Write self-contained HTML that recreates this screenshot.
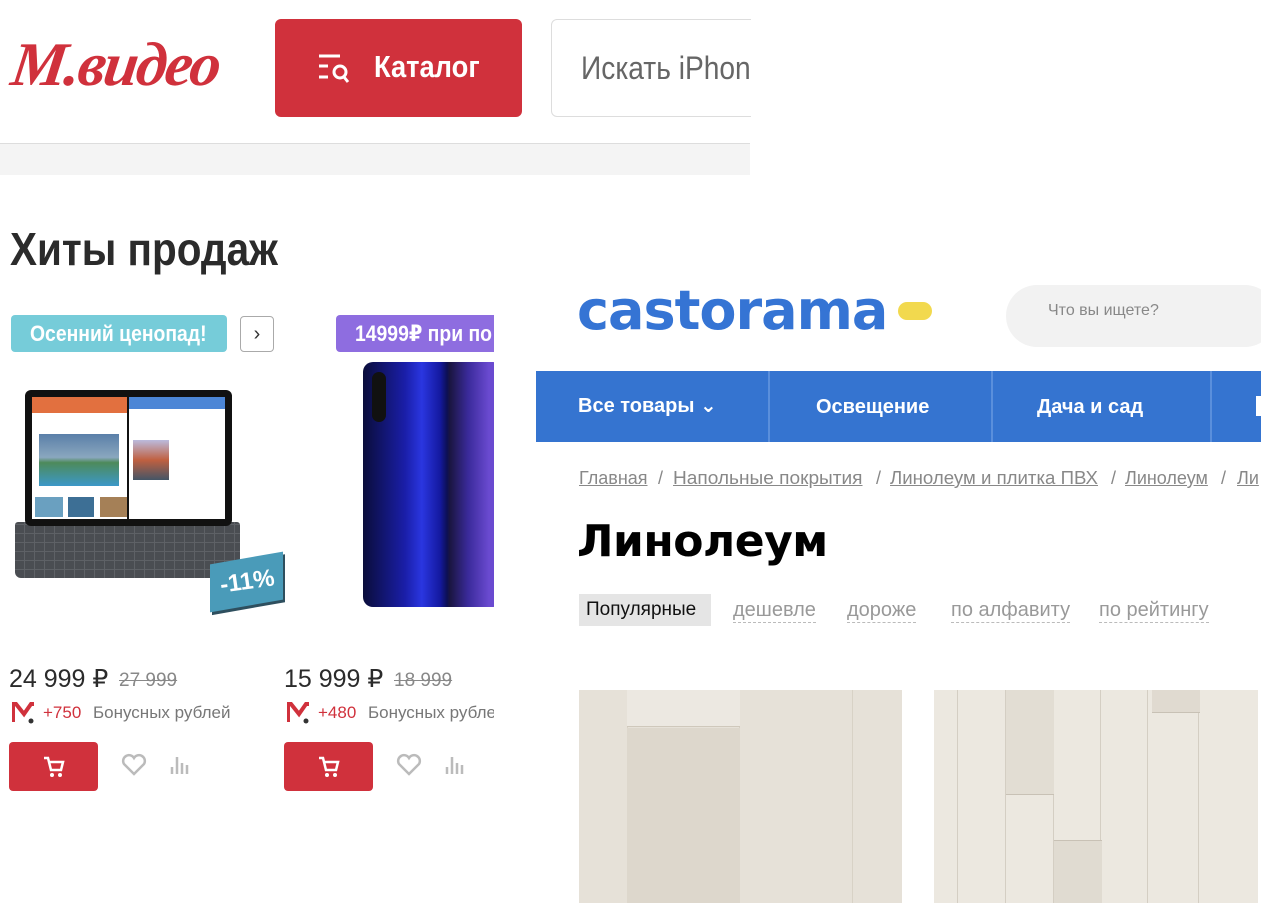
<!DOCTYPE html>
<html><head><meta charset="utf-8"><style>
*{margin:0;padding:0;box-sizing:border-box}
body{width:1261px;height:903px;position:relative;overflow:hidden;background:#fff;font-family:"Liberation Sans","DejaVu Sans",sans-serif}
.a{position:absolute;white-space:nowrap}
.cond{transform-origin:0 0;transform:scaleX(.88)}
.bc{position:absolute;top:468px;font-size:18px;color:#888;white-space:nowrap;transform-origin:0 0}
.bc u{text-decoration:underline}
</style></head><body>
<!-- M.video header -->
<div class="a" style="left:12px;top:30px;font-family:'Liberation Serif',serif;font-style:italic;font-weight:bold;font-size:62px;color:#d0313c;letter-spacing:-2px;line-height:70px;transform:skewX(-8deg)">М.видео</div>
<div class="a" style="left:275px;top:19px;width:247px;height:98px;background:#d0313c;border-radius:6px"></div>
<svg class="a" style="left:318px;top:52px" width="40" height="36" viewBox="0 0 40 36"><g stroke="#fff" stroke-width="3" fill="none"><line x1="1" y1="4" x2="22" y2="4"/><line x1="1" y1="14" x2="10" y2="14"/><line x1="1" y1="25" x2="10" y2="25"/><circle cx="22" cy="20" r="6"/><line x1="26" y1="25" x2="30" y2="30"/></g></svg>
<div class="a cond" style="left:374px;top:49px;font-size:31px;font-weight:bold;color:#fff">Каталог</div>
<div class="a" style="left:551px;top:19px;width:240px;height:98px;border:1.5px solid #ddd;border-radius:6px"></div>
<div class="a cond" style="left:581px;top:50px;font-size:32px;color:#666">Искать iPhon</div>
<div class="a" style="left:0;top:143px;width:750px;height:1px;background:#ddd"></div>
<div class="a" style="left:0;top:144px;width:750px;height:31px;background:#f4f4f4"></div>
<div class="a" style="left:751px;top:0;width:510px;height:176px;background:#fff"></div>
<div class="a cond" style="left:10px;top:222px;font-size:46px;font-weight:bold;color:#2b2b2b">Хиты продаж</div>
<div class="a" style="left:11px;top:315px;width:216px;height:37px;background:#76ccd9;border-radius:4px"></div>
<div class="a cond" style="left:30px;top:321px;font-size:22px;font-weight:bold;color:#fff">Осенний ценопад!</div>
<div class="a" style="left:240px;top:316px;width:34px;height:36px;border:1px solid #aaa;border-radius:4px;font-size:20px;text-align:center;line-height:34px;color:#333">›</div>
<div class="a" style="left:336px;top:315px;width:170px;height:37px;background:#8e6de0;border-radius:4px"></div>
<div class="a cond" style="left:355px;top:321px;font-size:22px;font-weight:bold;color:#fff">14999₽ при по</div>
<!-- tablet -->
<div class="a" style="left:15px;top:522px;width:225px;height:56px;background:#4a4d52;border-radius:3px 3px 6px 6px;background-image:repeating-linear-gradient(90deg,transparent 0 9px,#5e6166 9px 10px),repeating-linear-gradient(0deg,transparent 0 8px,#5e6166 8px 9px)"></div>
<div class="a" style="left:25px;top:390px;width:207px;height:136px;background:#111;border-radius:6px"></div>
<div class="a" style="left:32px;top:397px;width:95px;height:122px;background:#fff"></div>
<div class="a" style="left:32px;top:397px;width:95px;height:16px;background:#e2703f"></div>
<div class="a" style="left:39px;top:434px;width:80px;height:52px;background:linear-gradient(#5a7fa8,#8aa7bf 45%,#4d8a5a 55%,#3c98c8)"></div>
<div class="a" style="left:35px;top:497px;width:28px;height:20px;background:#6aa0c0"></div>
<div class="a" style="left:68px;top:497px;width:26px;height:20px;background:#3d6f95"></div>
<div class="a" style="left:100px;top:497px;width:27px;height:20px;background:#a58057"></div>
<div class="a" style="left:129px;top:397px;width:96px;height:122px;background:#fff"></div>
<div class="a" style="left:129px;top:397px;width:96px;height:12px;background:#4c86d6"></div>
<div class="a" style="left:133px;top:440px;width:36px;height:40px;background:linear-gradient(#bbd,#c06040 50%,#456)"></div>
<div class="a" style="left:210px;top:558px;width:73px;height:48px;background:#4a9bb9;transform:skewY(-10deg);box-shadow:2px 3px 0 #2e4f5e"></div>
<div class="a" style="left:220px;top:568px;font-size:24px;font-weight:bold;color:#fff;transform:rotate(-8deg)">-11%</div>
<!-- phone -->
<div class="a" style="left:363px;top:362px;width:140px;height:245px;border-radius:10px;background:linear-gradient(90deg,#0a0d3a,#1a1ea8 30%,#2a36e0 42%,#1419a0 55%,#0c0f55 60%,#1a1540 62%,#3a2a9a 75%,#6a4ad0 90%)"></div>
<div class="a" style="left:372px;top:372px;width:14px;height:50px;background:#111;border-radius:7px"></div>
<!-- prices -->
<div class="a" style="left:9px;top:664px;font-size:25px;color:#2b2b2b">24 999 ₽</div>
<div class="a" style="left:119px;top:670px;font-size:19px;color:#888;text-decoration:line-through">27 999</div>
<div class="a" style="left:284px;top:664px;font-size:25px;color:#2b2b2b">15 999 ₽</div>
<div class="a" style="left:394px;top:670px;font-size:19px;color:#888;text-decoration:line-through">18 999</div>
<svg class="a" style="left:12px;top:702px" width="24" height="22"><path d="M1 20V2h3l8 10 7-10h3" stroke="#d0313c" stroke-width="4" fill="none"/><circle cx="19" cy="19" r="2.5" fill="#333"/></svg>
<div class="a" style="left:43px;top:703px;font-size:17px;color:#d0313c">+750</div>
<div class="a" style="left:93px;top:703px;font-size:17px;color:#777">Бонусных рублей</div>
<svg class="a" style="left:287px;top:702px" width="24" height="22"><path d="M1 20V2h3l8 10 7-10h3" stroke="#d0313c" stroke-width="4" fill="none"/><circle cx="19" cy="19" r="2.5" fill="#333"/></svg>
<div class="a" style="left:318px;top:703px;font-size:17px;color:#d0313c">+480</div>
<div class="a" style="left:368px;top:703px;font-size:17px;color:#777">Бонусных рубле</div>
<div class="a" style="left:9px;top:742px;width:89px;height:49px;background:#d0313c;border-radius:4px"></div>
<div class="a" style="left:284px;top:742px;width:89px;height:49px;background:#d0313c;border-radius:4px"></div>
<svg class="a" style="left:42px;top:755px" width="24" height="24"><path d="M2 3h4l3 12h10l2-8H8" stroke="#fff" stroke-width="2.5" fill="none"/><circle cx="10" cy="20" r="2" fill="#fff"/><circle cx="18" cy="20" r="2" fill="#fff"/></svg>
<svg class="a" style="left:317px;top:755px" width="24" height="24"><path d="M2 3h4l3 12h10l2-8H8" stroke="#fff" stroke-width="2.5" fill="none"/><circle cx="10" cy="20" r="2" fill="#fff"/><circle cx="18" cy="20" r="2" fill="#fff"/></svg>
<svg class="a" style="left:121px;top:753px" width="26" height="24"><path d="M13 21L3 11a5.5 5.5 0 0 1 10-6 5.5 5.5 0 0 1 10 6z" stroke="#bbb" stroke-width="2.5" fill="none"/></svg>
<svg class="a" style="left:396px;top:753px" width="26" height="24"><path d="M13 21L3 11a5.5 5.5 0 0 1 10-6 5.5 5.5 0 0 1 10 6z" stroke="#bbb" stroke-width="2.5" fill="none"/></svg>
<svg class="a" style="left:169px;top:753px" width="20" height="22"><g stroke="#bbb" stroke-width="2.5"><line x1="3" y1="21" x2="3" y2="14"/><line x1="8" y1="21" x2="8" y2="4"/><line x1="13" y1="21" x2="13" y2="10"/><line x1="18" y1="21" x2="18" y2="12"/></g></svg>
<svg class="a" style="left:444px;top:753px" width="20" height="22"><g stroke="#bbb" stroke-width="2.5"><line x1="3" y1="21" x2="3" y2="14"/><line x1="8" y1="21" x2="8" y2="4"/><line x1="13" y1="21" x2="13" y2="10"/><line x1="18" y1="21" x2="18" y2="12"/></g></svg>
<!-- castorama panel -->
<div class="a" style="left:494px;top:270px;width:767px;height:633px;background:#fff"></div>
<div class="a" style="left:577px;top:276px;font-family:'DejaVu Sans',sans-serif;font-weight:bold;font-size:54px;color:#3574d4;letter-spacing:-1px;line-height:70px">castorama</div>
<div class="a" style="left:898px;top:302px;width:34px;height:18px;border-radius:9px;background:#f2d94e"></div>
<div class="a" style="left:1006px;top:285px;width:270px;height:62px;border-radius:31px;background:#f2f2f2"></div>
<div class="a" style="left:1048px;top:302px;font-size:16px;color:#888">Что вы ищете?</div>
<div class="a" style="left:536px;top:371px;width:725px;height:71px;background:#3574d0"></div>
<div class="a" style="left:768px;top:371px;width:2px;height:71px;background:#5a8fdc"></div>
<div class="a" style="left:991px;top:371px;width:2px;height:71px;background:#5a8fdc"></div>
<div class="a" style="left:1210px;top:371px;width:2px;height:71px;background:#5a8fdc"></div>
<div class="a" style="left:578px;top:393px;font-size:20px;font-weight:bold;color:#fff">Все товары ⌄</div>
<div class="a" style="left:816px;top:396px;font-size:20px;font-weight:bold;color:#fff">Освещение</div>
<div class="a" style="left:1037px;top:396px;font-size:20px;font-weight:bold;color:#fff">Дача и сад</div>
<div class="a" style="left:1256px;top:396px;width:5px;height:20px;background:#fff"></div>
<div class="bc" style="left:579px"><u>Главная</u></div><div class="bc" style="left:658px">/</div>
<div class="bc" style="left:673px;transform:scaleX(1.06)"><u>Напольные покрытия</u></div><div class="bc" style="left:876px">/</div>
<div class="bc" style="left:890px;transform:scaleX(1.035)"><u>Линолеум и плитка ПВХ</u></div><div class="bc" style="left:1111px">/</div>
<div class="bc" style="left:1125px"><u>Линолеум</u></div><div class="bc" style="left:1221px">/</div>
<div class="bc" style="left:1237px"><u>Ли</u></div>
<div class="a" style="left:577px;top:516px;font-family:'DejaVu Sans',sans-serif;font-weight:bold;font-size:44px;color:#000;letter-spacing:-0.5px">Линолеум</div>
<div class="a" style="left:579px;top:594px;width:132px;height:32px;background:#e5e5e5"></div>
<div class="a" style="left:586px;top:599px;font-size:19px;color:#111">Популярные</div>
<div class="a" style="left:733px;top:599px;font-size:20px;color:#999;border-bottom:1px dashed #bbb">дешевле</div>
<div class="a" style="left:847px;top:599px;font-size:20px;color:#999;border-bottom:1px dashed #bbb">дороже</div>
<div class="a" style="left:951px;top:599px;font-size:20px;color:#999;border-bottom:1px dashed #bbb">по алфавиту</div>
<div class="a" style="left:1099px;top:599px;font-size:20px;color:#999;border-bottom:1px dashed #bbb">по рейтингу</div>
<!-- floors -->
<div class="a" style="left:579px;top:690px;width:323px;height:213px;background:#e6e1d8;background-image:linear-gradient(90deg,transparent 48px,#d8d2c6 48px 49px,transparent 49px 160px,#d5cfc3 160px 161px,transparent 161px 273px,#d8d2c6 273px 274px,transparent 274px)"></div>
<div class="a" style="left:627px;top:690px;width:113px;height:37px;background:#ece8e1;border-bottom:1px solid #cfc8bb"></div>
<div class="a" style="left:627px;top:728px;width:113px;height:175px;background:#ddd7cc"></div>
<div class="a" style="left:934px;top:690px;width:324px;height:213px;background:#ece8e0;background-image:linear-gradient(90deg,transparent 23px,#d4cec3 23px 24px,transparent 24px 71px,#d4cec3 71px 72px,transparent 72px 119px,#d4cec3 119px 120px,transparent 120px 166px,#d4cec3 166px 167px,transparent 167px 213px,#d4cec3 213px 214px,transparent 214px 264px,#d4cec3 264px 265px,transparent 265px)"></div>
<div class="a" style="left:1054px;top:840px;width:48px;height:63px;background:#e0dbd1;border-top:1px solid #c8c1b5"></div>
<div class="a" style="left:1006px;top:690px;width:48px;height:105px;background:#e2ddd3;border-bottom:1px solid #c8c1b5"></div>
<div class="a" style="left:1152px;top:690px;width:48px;height:23px;background:#e0dad0;border-bottom:1px solid #c8c1b5"></div>
</body></html>
